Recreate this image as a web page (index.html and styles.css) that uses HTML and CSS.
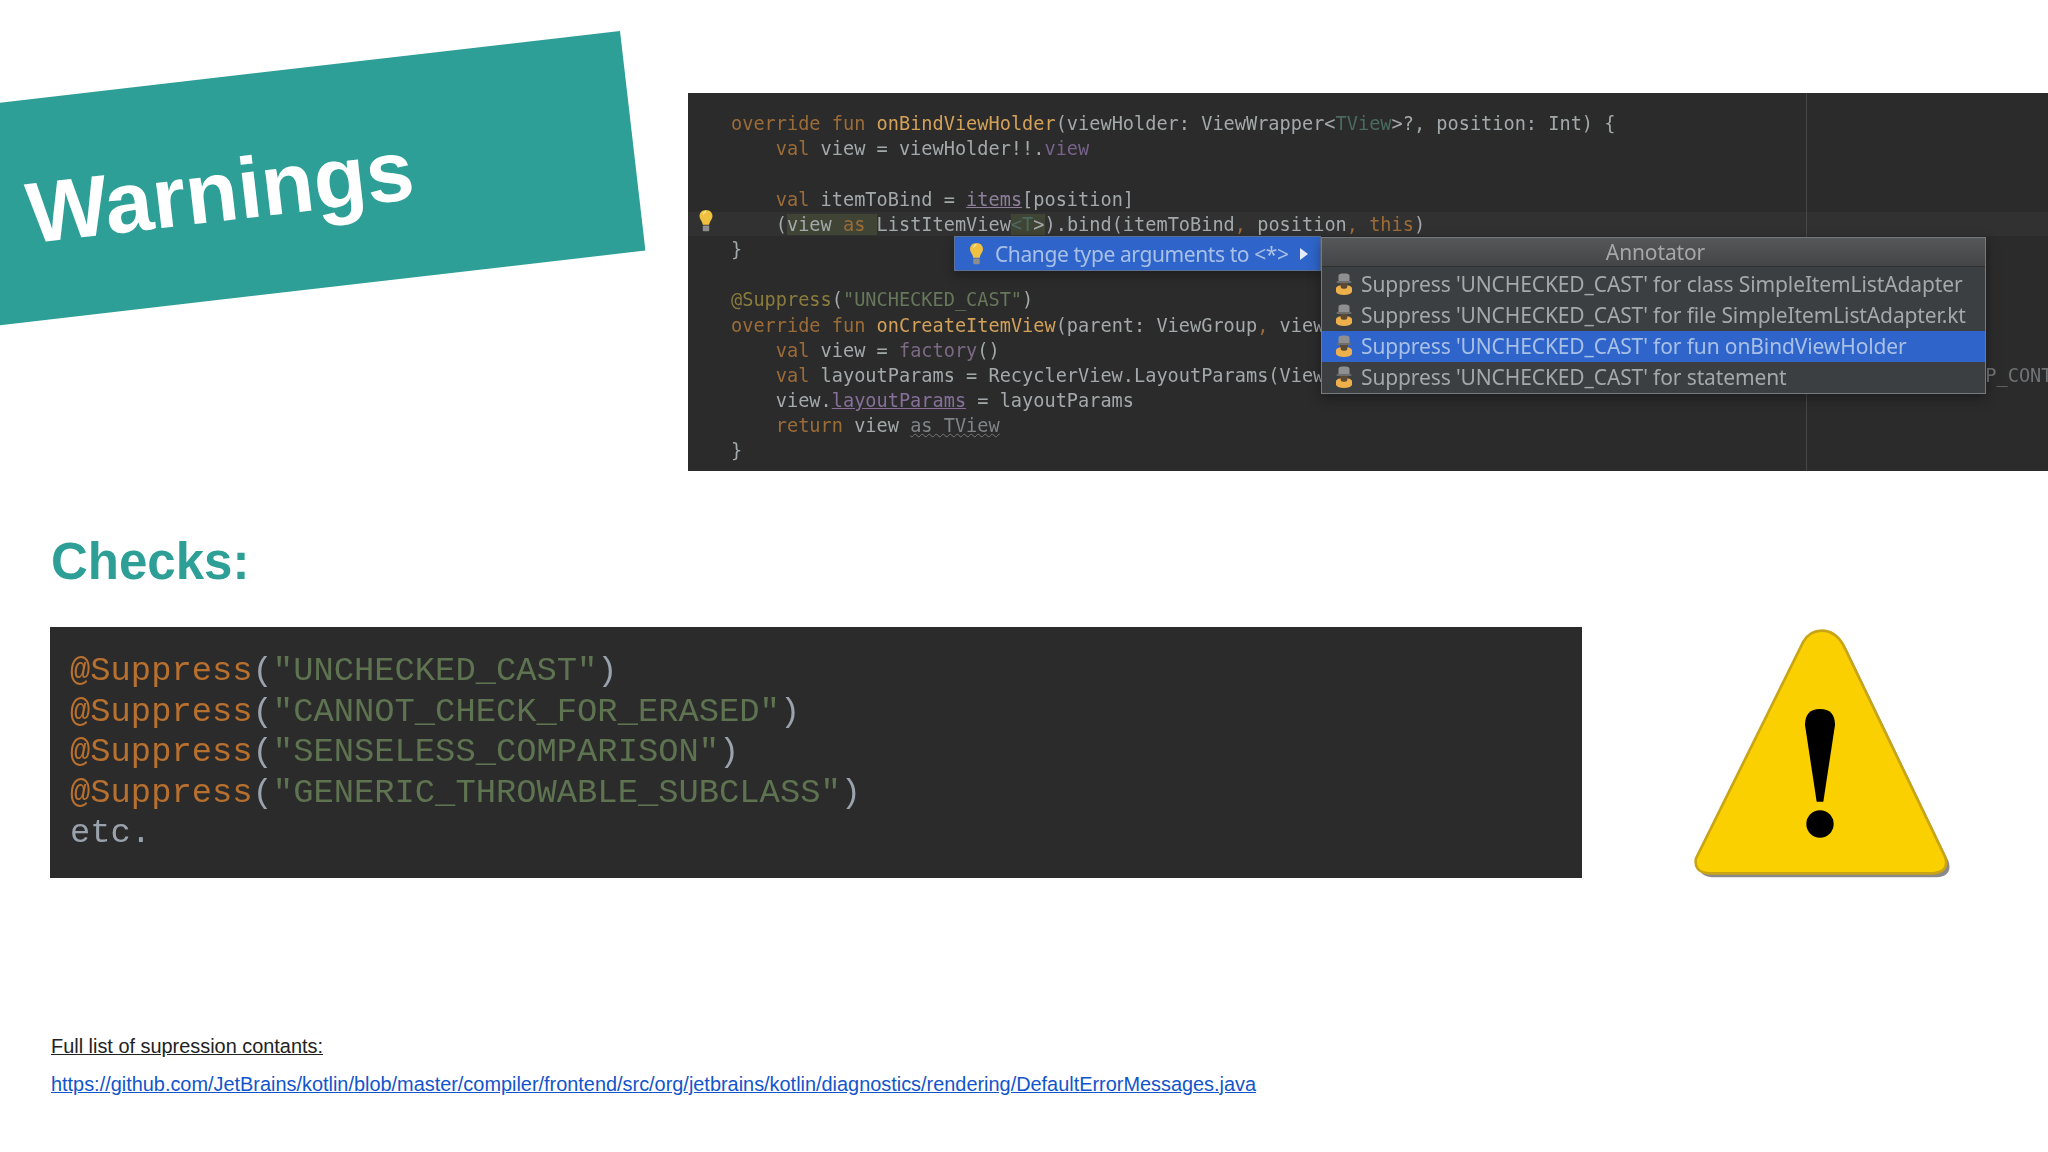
FILE: index.html
```html
<!DOCTYPE html>
<html lang="en">
<head>
  <meta charset="UTF-8">
  <title>Warnings</title>
  <link rel="stylesheet" href="styles.css">
</head>
<body>
  <svg class="defs" width="0" height="0">
    <symbol id="bulb" viewBox="0 0 16 26">
      <path d="M8 1C3.500 1 1 4 1 7.500c0 3.500 3 5.500 3.500 9.500h7C12 13 15 11 15 7.500 15 4 12.500 1 8 1z" fill="#f0c040"/>
      <path d="M5 6c0-1.500 1.500-3 3-3" stroke="#fbe9a0" stroke-width="1.500" fill="none"/>
      <rect x="4.500" y="18" width="7" height="6" rx="1" fill="#8d8d8d"/>
    </symbol>
    <symbol id="spy" viewBox="0 0 18 22">
      <path d="M3.500 9V3C3.500 1 6 .5 9 .5s5.500 .5 5.500 2.500V9z" fill="#8f8f8f"/>
      <rect x="1.500" y="8" width="15" height="2" rx="1" fill="#6d6d6d"/>
      <path d="M1 15c1-2 3-3 8-3s7 1 8 3v4c-1 2-4 3-8 3s-7-1-8-3z" fill="#eeb04a"/>
      <path d="M5 10h8l-1 5c-1 1-5 1-6 0z" fill="#5d4a32"/>
    </symbol>
  </svg>

  <div class="slide">
    <div class="banner"><span class="banner-title">Warnings</span></div>

    <div class="top-row">
      <div class="shot">
        <div class="caret-line"></div>
        <div class="margin-line"></div>
        <svg class="gutter-bulb"><use href="#bulb"/></svg>

        <div class="editor">
          <div class="line"><span class="kw">override fun</span> <span class="fn">onBindViewHolder</span>(viewHolder: ViewWrapper&lt;<span class="gen">TView</span>&gt;?, position: Int) {</div>
          <div class="line">    <span class="kw">val</span> view = viewHolder!!.<span class="prop">view</span></div>
          <div class="line"></div>
          <div class="line">    <span class="kw">val</span> itemToBind = <span class="link">items</span>[position]</div>
          <div class="line">    (<span class="hl">view <span class="kw">as</span> </span>ListItemView<span class="hl"><span class="gen">&lt;T</span>&gt;</span>).bind(itemToBind<span class="kw">,</span> position<span class="kw">,</span> <span class="kw">this</span>)</div>
          <div class="line">}</div>
          <div class="line"></div>
          <div class="line"><span class="ann">@Suppress</span>(<span class="str">"UNCHECKED_CAST"</span>)</div>
          <div class="line"><span class="kw">override fun</span> <span class="fn">onCreateItemView</span>(parent: ViewGroup<span class="kw">,</span> view</div>
          <div class="line">    <span class="kw">val</span> view = <span class="dim">factory</span>()</div>
          <div class="line">    <span class="kw">val</span> layoutParams = RecyclerView.LayoutParams(View<span class="line-tail">P_CONT</span></div>
          <div class="line">    view.<span class="link-purple">layoutParams</span> = layoutParams</div>
          <div class="line">    <span class="kw">return</span> view <span class="warn">as TView</span></div>
          <div class="line">}</div>
        </div>

        <div class="intention">
          <svg class="intention-bulb"><use href="#bulb"/></svg>
          <span class="intention-text">Change type arguments to &lt;*&gt;</span>
          <span class="intention-arrow"></span>
        </div>

        <div class="annotator">
          <div class="annotator-head">Annotator</div>
          <div class="annotator-row"><svg class="spy"><use href="#spy"/></svg>Suppress 'UNCHECKED_CAST' for class SimpleItemListAdapter</div>
          <div class="annotator-row"><svg class="spy"><use href="#spy"/></svg>Suppress 'UNCHECKED_CAST' for file SimpleItemListAdapter.kt</div>
          <div class="annotator-row selected"><svg class="spy"><use href="#spy"/></svg>Suppress 'UNCHECKED_CAST' for fun onBindViewHolder</div>
          <div class="annotator-row"><svg class="spy"><use href="#spy"/></svg>Suppress 'UNCHECKED_CAST' for statement</div>
        </div>
      </div>
    </div>

    <h2 class="checks-title">Checks:</h2>

    <div class="checks-row">
      <div class="checks-code">
        <div class="code-line"><span class="c-ann">@Suppress</span>(<span class="c-str">"UNCHECKED_CAST"</span>)</div>
        <div class="code-line"><span class="c-ann">@Suppress</span>(<span class="c-str">"CANNOT_CHECK_FOR_ERASED"</span>)</div>
        <div class="code-line"><span class="c-ann">@Suppress</span>(<span class="c-str">"SENSELESS_COMPARISON"</span>)</div>
        <div class="code-line"><span class="c-ann">@Suppress</span>(<span class="c-str">"GENERIC_THROWABLE_SUBCLASS"</span>)</div>
        <div class="code-line">etc.</div>
      </div>
      <svg class="warning-sign" viewBox="0 0 900 870" width="300" height="290">
        <path class="sign-shadow" d="M400 95Q420 62 455 62Q495 62 520 105L825 740Q840 785 790 790L115 790Q70 785 78 745Z"/>
        <path class="sign-body" d="M400 95Q420 62 455 62Q495 62 520 105L825 740Q840 785 790 790L115 790Q70 785 78 745Z"/>
        <path d="M450 297Q495 297 495 345L460 575L440 575L405 345Q405 297 450 297Z"/>
        <circle cx="450" cy="642" r="41"/>
      </svg>
    </div>

    <div class="notes">
      <p class="note-label">Full list of supression contants:</p>
      <a class="note-link" href="#">https://github.com/JetBrains/kotlin/blob/master/compiler/frontend/src/org/jetbrains/kotlin/diagnostics/rendering/DefaultErrorMessages.java</a>
    </div>
  </div>
</body>
</html>
```

FILE: styles.css
```css
* {
  box-sizing: border-box;
}

body {
  margin: 0;
  background: #fff;
  font-family: "Liberation Sans", Arial, sans-serif;
}

.defs {
  position: absolute;
}

.slide {
  position: relative;
  width: 2048px;
  height: 1152px;
  overflow: hidden;
}

/* banner */
.banner {
  position: absolute;
  left: -80px;
  top: 31px;
  width: 700px;
  height: 221px;
  padding: 63px 0 0 90px;
  background: #2d9f96;
  transform: rotate(-6.6deg);
  transform-origin: 100% 0;
}

.banner-title {
  display: block;
  font-size: 86px;
  line-height: 100px;
  font-weight: 700;
  color: #fff;
}

/* ide screenshot */
.top-row {
  display: flex;
  justify-content: flex-end;
  padding-top: 93px;
}

.shot {
  position: relative;
  width: 1360px;
  height: 378px;
  overflow: hidden;
  background: #2b2b2b;
  filter: blur(0.5px);
}

.caret-line {
  position: absolute;
  left: 0;
  right: 0;
  top: 119px;
  height: 24px;
  background: #313131;
}

.margin-line {
  position: absolute;
  left: 1118px;
  top: 0;
  bottom: 0;
  width: 1px;
  background: #474747;
}

.gutter-bulb {
  position: absolute;
  left: 10px;
  top: 116px;
  width: 16px;
  height: 24px;
}

.editor {
  position: relative;
  padding: 18px 0 0 43px;
  font-family: "DejaVu Sans Mono", monospace;
  font-size: 18.6px;
  color: #a3a9ab;
}

.line {
  height: 25.2px;
  line-height: 25.2px;
  white-space: pre;
}

.line-tail {
  margin-left: 661px;
  color: #6f7375;
}

.kw { color: #9c6c38; }
.fn { color: #d4a159; }
.gen { color: #4a6a60; }
.prop { color: #77628a; }
.ann { color: #8a7d3c; }
.str { color: #66775a; }
.dim { color: #7c6a85; }
.hl { background: #3f4435; }

.link {
  color: #8d7f9c;
  text-decoration: underline;
}

.link-purple {
  color: #86709a;
  text-decoration: underline;
}

.warn {
  color: #7f8486;
  text-decoration: underline wavy #777;
  text-decoration-thickness: 1px;
}

.intention {
  position: absolute;
  left: 266px;
  top: 143px;
  width: 367px;
  height: 35px;
  display: flex;
  align-items: center;
  padding-left: 14px;
  background: #2f65ca;
  border: 1px solid #5c6f94;
  box-shadow: 0 4px 10px rgba(0, 0, 0, 0.3);
  font-family: "Noto Sans", sans-serif;
  font-size: 21px;
  letter-spacing: -0.4px;
  color: #a9c0e6;
}

.intention-bulb {
  width: 15px;
  height: 24px;
  margin-right: 11px;
  flex: none;
}

.intention-arrow {
  margin-left: 11px;
  border-left: 8px solid #e6ecf7;
  border-top: 6px solid transparent;
  border-bottom: 6px solid transparent;
}

.annotator {
  position: absolute;
  left: 633px;
  top: 144px;
  width: 665px;
  height: 157px;
  background: #3c3f41;
  border: 1px solid #77797b;
  box-shadow: 0 4px 12px rgba(0, 0, 0, 0.35);
  font-family: "Noto Sans", sans-serif;
  font-size: 21px;
  letter-spacing: -0.12px;
  color: #a5a8aa;
}

.annotator-head {
  height: 29px;
  padding-left: 4px;
  line-height: 29px;
  margin-bottom: 2px;
  text-align: center;
  background: linear-gradient(#555759, #434547);
  border-bottom: 1px solid #2f3132;
}

.annotator-row {
  display: flex;
  align-items: center;
  height: 31px;
  padding-bottom: 1px;
  white-space: nowrap;
}

.annotator-row.selected {
  background: #2f65ca;
  color: #a9c0e6;
}

.spy {
  width: 18px;
  height: 22px;
  margin: 0 8px 0 13px;
  flex: none;
}

/* checks */
.checks-title {
  margin: 63px 0 0 51px;
  font-size: 51px;
  line-height: 56px;
  font-weight: 700;
  color: #2d9f96;
}

.checks-row {
  display: flex;
  align-items: flex-start;
  margin: 37px 0 0 50px;
}

.checks-code {
  width: 1532px;
  height: 251px;
  padding: 24px 0 0 20px;
  background: #2b2b2b;
  font-family: "Liberation Mono", "Courier New", monospace;
  font-size: 33.8px;
  color: #9aa3ad;
  filter: blur(0.4px);
}

.code-line {
  height: 40.5px;
  line-height: 40.5px;
  white-space: pre;
}

.c-ann { color: #b8702f; }
.c-str { color: #5e7350; }

.warning-sign {
  margin: -17px 0 0 88px;
  flex: none;
}

.sign-shadow {
  fill: #8a8a8a;
  transform: translate(10px, 12px);
  filter: blur(1px);
}

.sign-body {
  fill: #fbd000;
  stroke: #c9a516;
  stroke-width: 8;
}

/* notes */
.notes {
  margin: 134px 0 0 51px;
  font-size: 19.9px;
}

.note-label {
  margin: 0 0 14px;
  line-height: 24px;
  color: #222;
  text-decoration: underline;
}

.note-link {
  display: block;
  line-height: 24px;
  color: #1155cc;
}
```
